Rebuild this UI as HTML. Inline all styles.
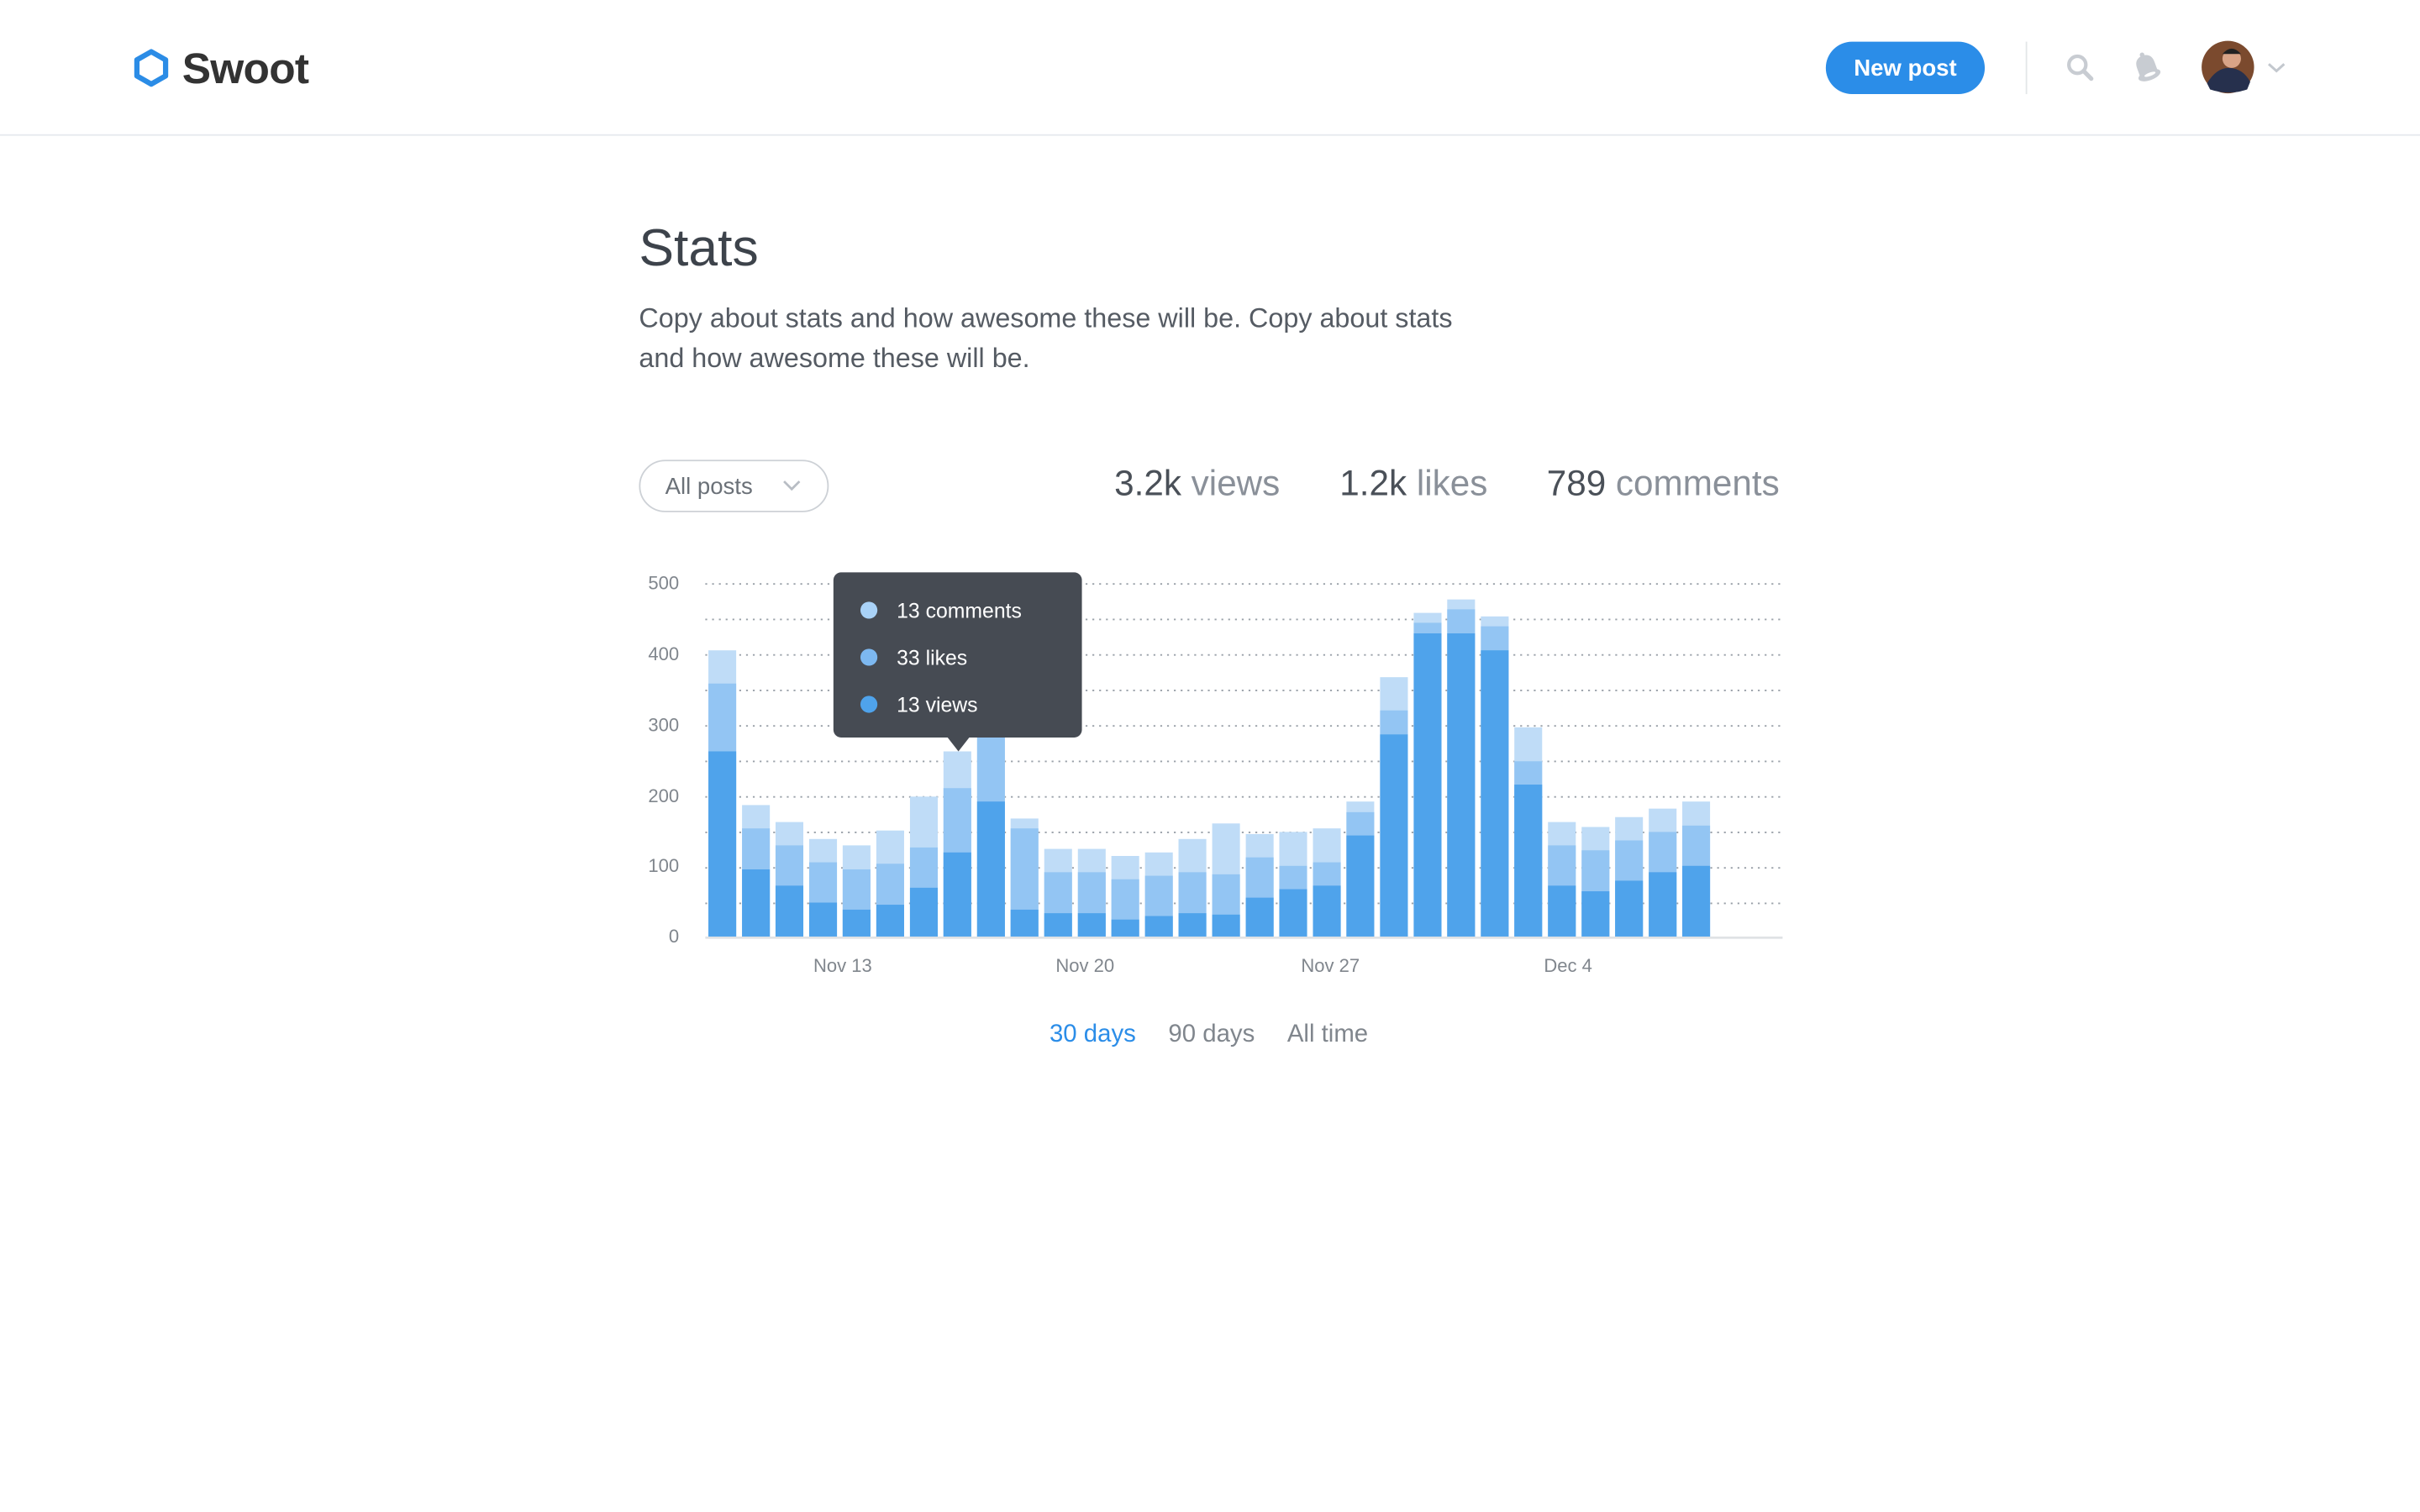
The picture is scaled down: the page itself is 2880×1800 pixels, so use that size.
<!DOCTYPE html>
<html><head><meta charset="utf-8">
<style>
html,body{margin:0;padding:0;background:#fff;width:2880px;height:1800px;overflow:hidden}
svg{display:block}
text{font-family:"Liberation Sans",Arial,sans-serif}
</style></head>
<body>
<svg width="2880" height="1800" viewBox="0 0 1568 980" xmlns="http://www.w3.org/2000/svg">
<!-- header -->
<rect x="0" y="87" width="1568" height="1" fill="#e6eaee"/>
<polygon points="98,33.5 107.3,38.8 107.3,49.2 98,54.5 88.7,49.2 88.7,38.8" fill="none" stroke="#2b8ce6" stroke-width="3.4" stroke-linejoin="round"/>
<text x="118" y="54" font-size="28" font-weight="700" fill="#333" letter-spacing="-0.4">Swoot</text>
<rect x="1183" y="27" width="103" height="34" rx="17" fill="#2b8de8"/>
<text x="1234.5" y="49" font-size="15" fill="#fff" text-anchor="middle" font-weight="600">New post</text>
<rect x="1312.5" y="27" width="1" height="34" fill="#e3e6e9"/>
<circle cx="1346" cy="42" r="5.5" fill="none" stroke="#c8ccd2" stroke-width="2.3"/>
<line x1="1350" y1="46" x2="1355" y2="51" stroke="#c8ccd2" stroke-width="2.8" stroke-linecap="round"/>
<g transform="rotate(-20 1391 44)">
<path d="M1385 49 L1385 42 Q1385 36 1391 35.5 Q1397 36 1397 42 L1397 49 Z" fill="#c8ccd2"/>
<ellipse cx="1391" cy="49" rx="7.5" ry="3.3" fill="#c8ccd2"/>
<ellipse cx="1391.5" cy="48.6" rx="3.8" ry="1.1" fill="#fff"/>
<circle cx="1391" cy="35" r="1.5" fill="#c8ccd2"/>
</g>
<circle cx="1443.5" cy="43.5" r="17" fill="#7b4a2e"/>
<path d="M1430 54 Q1436 44 1444 44 Q1453 44 1458 53 L1456 58 Q1444 62 1432 58 Z" fill="#26304d"/>
<circle cx="1446" cy="38" r="6" fill="#d9a487"/>
<path d="M1440 35 Q1446 28 1452 35 Z" fill="#222"/>
<polyline points="1470,41.5 1475,46 1480,41.5" fill="none" stroke="#c3c8ce" stroke-width="1.6"/>

<!-- title -->
<text x="414" y="172" font-size="34" fill="#3d434b" font-weight="500">Stats</text>
<text x="414" y="212" font-size="17.6" fill="#555b63">Copy about stats and how awesome these will be. Copy about stats</text>
<text x="414" y="238" font-size="17.6" fill="#555b63">and how awesome these will be.</text>

<!-- dropdown -->
<rect x="414.5" y="298.5" width="122" height="33" rx="16.5" fill="#fff" stroke="#cdd1d6"/>
<text x="431" y="320" font-size="15" fill="#6b7178">All posts</text>
<polyline points="508,312 513,317 518,312" fill="none" stroke="#b8bdc4" stroke-width="1.5"/>

<!-- summary -->
<g font-size="23">
<text x="722" y="321"><tspan fill="#4a5058">3.2k</tspan><tspan fill="#8a9099"> views</tspan></text>
<text x="868" y="321"><tspan fill="#4a5058">1.2k</tspan><tspan fill="#8a9099"> likes</tspan></text>
<text x="1153" y="321" text-anchor="end"><tspan fill="#4a5058">789</tspan><tspan fill="#8a9099"> comments</tspan></text>
</g>

<!-- grid -->
<g stroke="#9aa1a9" stroke-width="1" stroke-dasharray="1.2 3.2">
<line x1="457" y1="378.5" x2="1155" y2="378.5"/>
<line x1="457" y1="401.5" x2="1155" y2="401.5"/>
<line x1="457" y1="424.5" x2="1155" y2="424.5"/>
<line x1="457" y1="447.5" x2="1155" y2="447.5"/>
<line x1="457" y1="470.5" x2="1155" y2="470.5"/>
<line x1="457" y1="493.5" x2="1155" y2="493.5"/>
<line x1="457" y1="516.5" x2="1155" y2="516.5"/>
<line x1="457" y1="539.5" x2="1155" y2="539.5"/>
<line x1="457" y1="562.5" x2="1155" y2="562.5"/>
<line x1="457" y1="585.5" x2="1155" y2="585.5"/>
</g>
<rect x="457" y="607" width="698" height="1.5" fill="#dfe2e5"/>
<g font-size="12" fill="#80868d" text-anchor="end">
<text x="440" y="382">500</text><text x="440" y="428">400</text><text x="440" y="474">300</text>
<text x="440" y="520">200</text><text x="440" y="565">100</text><text x="440" y="611">0</text>
</g>
<g font-size="12" fill="#80868d" text-anchor="middle">
<text x="546" y="630">Nov 13</text><text x="703" y="630">Nov 20</text><text x="862" y="630">Nov 27</text><text x="1016" y="630">Dec 4</text>
</g>

<!-- bars -->
<g transform="translate(0,607) scale(1,-0.458)">
<g fill="#bfdcf7">
<rect x="459" y="0" width="18" height="405"/><rect x="480.8" y="0" width="18" height="186"/><rect x="502.5" y="0" width="18" height="162"/><rect x="524.3" y="0" width="18" height="138"/><rect x="546" y="0" width="18" height="129"/><rect x="567.8" y="0" width="18" height="150"/><rect x="589.6" y="0" width="18" height="198"/><rect x="611.3" y="0" width="18" height="262"/><rect x="633.1" y="0" width="18" height="330"/><rect x="654.8" y="0" width="18" height="167"/><rect x="676.6" y="0" width="18" height="124"/><rect x="698.4" y="0" width="18" height="124"/><rect x="720.1" y="0" width="18" height="114"/><rect x="741.9" y="0" width="18" height="119"/><rect x="763.6" y="0" width="18" height="138"/><rect x="785.4" y="0" width="18" height="160"/><rect x="807.2" y="0" width="18" height="145"/><rect x="828.9" y="0" width="18" height="148"/><rect x="850.7" y="0" width="18" height="153"/><rect x="872.4" y="0" width="18" height="191"/><rect x="894.2" y="0" width="18" height="367"/><rect x="916" y="0" width="18" height="458"/><rect x="937.7" y="0" width="18" height="477"/><rect x="959.5" y="0" width="18" height="453"/><rect x="981.2" y="0" width="18" height="296"/><rect x="1003" y="0" width="18" height="162"/><rect x="1024.8" y="0" width="18" height="155"/><rect x="1046.5" y="0" width="18" height="169"/><rect x="1068.3" y="0" width="18" height="181"/><rect x="1090" y="0" width="18" height="191"/>
</g>
<g fill="#93c5f3">
<rect x="459" y="0" width="18" height="358"/><rect x="480.8" y="0" width="18" height="153"/><rect x="502.5" y="0" width="18" height="129"/><rect x="524.3" y="0" width="18" height="105"/><rect x="546" y="0" width="18" height="95"/><rect x="567.8" y="0" width="18" height="103"/><rect x="589.6" y="0" width="18" height="126"/><rect x="611.3" y="0" width="18" height="210"/><rect x="633.1" y="0" width="18" height="301"/><rect x="654.8" y="0" width="18" height="153"/><rect x="676.6" y="0" width="18" height="91"/><rect x="698.4" y="0" width="18" height="91"/><rect x="720.1" y="0" width="18" height="81"/><rect x="741.9" y="0" width="18" height="86"/><rect x="763.6" y="0" width="18" height="91"/><rect x="785.4" y="0" width="18" height="88"/><rect x="807.2" y="0" width="18" height="112"/><rect x="828.9" y="0" width="18" height="100"/><rect x="850.7" y="0" width="18" height="105"/><rect x="872.4" y="0" width="18" height="176"/><rect x="894.2" y="0" width="18" height="320"/><rect x="916" y="0" width="18" height="444"/><rect x="937.7" y="0" width="18" height="463"/><rect x="959.5" y="0" width="18" height="439"/><rect x="981.2" y="0" width="18" height="248"/><rect x="1003" y="0" width="18" height="129"/><rect x="1024.8" y="0" width="18" height="122"/><rect x="1046.5" y="0" width="18" height="136"/><rect x="1068.3" y="0" width="18" height="148"/><rect x="1090" y="0" width="18" height="157"/>
</g>
<g fill="#4fa3eb">
<rect x="459" y="0" width="18" height="262"/><rect x="480.8" y="0" width="18" height="95"/><rect x="502.5" y="0" width="18" height="72"/><rect x="524.3" y="0" width="18" height="48"/><rect x="546" y="0" width="18" height="38"/><rect x="567.8" y="0" width="18" height="45"/><rect x="589.6" y="0" width="18" height="69"/><rect x="611.3" y="0" width="18" height="119"/><rect x="633.1" y="0" width="18" height="191"/><rect x="654.8" y="0" width="18" height="38"/><rect x="676.6" y="0" width="18" height="33"/><rect x="698.4" y="0" width="18" height="33"/><rect x="720.1" y="0" width="18" height="24"/><rect x="741.9" y="0" width="18" height="29"/><rect x="763.6" y="0" width="18" height="33"/><rect x="785.4" y="0" width="18" height="31"/><rect x="807.2" y="0" width="18" height="55"/><rect x="828.9" y="0" width="18" height="67"/><rect x="850.7" y="0" width="18" height="72"/><rect x="872.4" y="0" width="18" height="143"/><rect x="894.2" y="0" width="18" height="286"/><rect x="916" y="0" width="18" height="429"/><rect x="937.7" y="0" width="18" height="429"/><rect x="959.5" y="0" width="18" height="405"/><rect x="981.2" y="0" width="18" height="215"/><rect x="1003" y="0" width="18" height="72"/><rect x="1024.8" y="0" width="18" height="64"/><rect x="1046.5" y="0" width="18" height="79"/><rect x="1068.3" y="0" width="18" height="91"/><rect x="1090" y="0" width="18" height="100"/>
</g>
</g>

<!-- tooltip -->
<rect x="540" y="371" width="161" height="107" rx="5" fill="#464b53"/>
<polygon points="614,478 628,478 621,487" fill="#464b53"/>
<circle cx="563" cy="395.5" r="5.5" fill="#a9d2f7"/>
<circle cx="563" cy="426" r="5.5" fill="#7db8f0"/>
<circle cx="563" cy="456.5" r="5.5" fill="#4fa3eb"/>
<g font-size="13.5" fill="#fff">
<text x="581" y="400.5">13 comments</text>
<text x="581" y="431">33 likes</text>
<text x="581" y="461.5">13 views</text>
</g>

<!-- range tabs -->
<g font-size="16">
<text x="680" y="675" fill="#2b8de8">30 days</text>
<text x="757" y="675" fill="#80868d">90 days</text>
<text x="834" y="675" fill="#80868d">All time</text>
</g>
</svg>
</body></html>
